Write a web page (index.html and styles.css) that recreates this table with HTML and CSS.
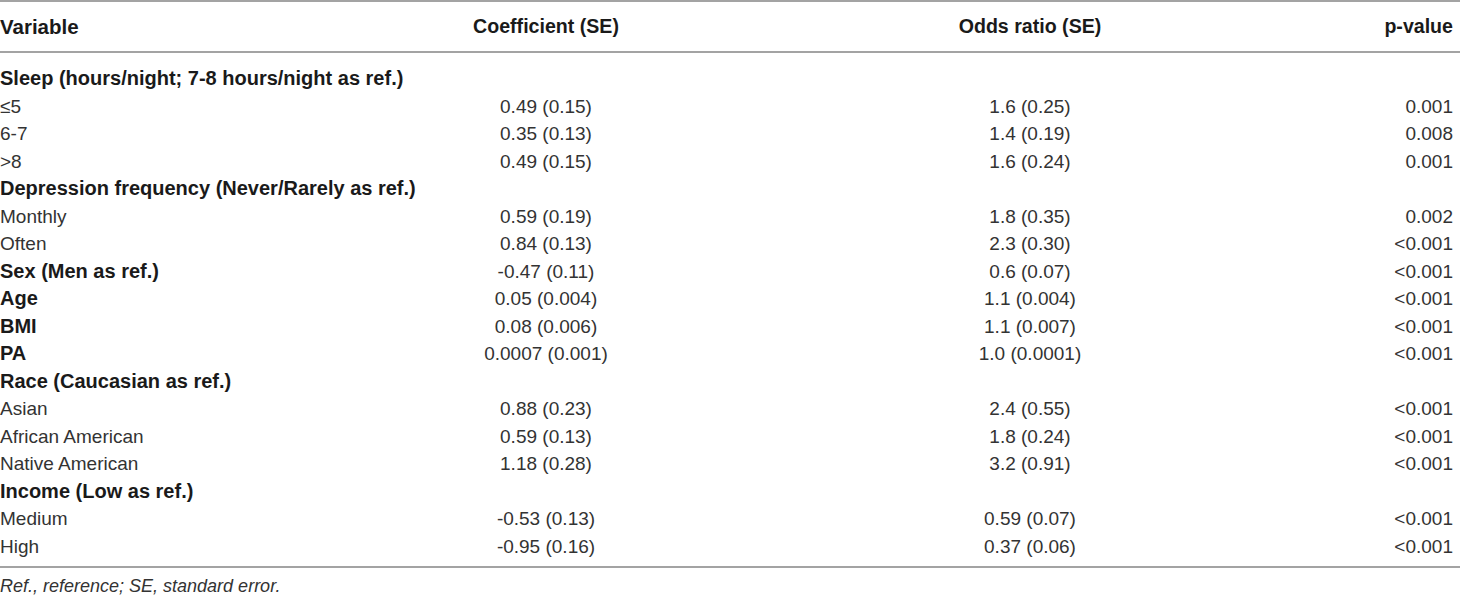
FILE: index.html
```html
<!DOCTYPE html>
<html>
<head>
<meta charset="utf-8">
<link rel="stylesheet" href="styles.css">
</head>
<body>
<table class="tbl">
  <colgroup>
    <col class="c1"><col class="c2"><col class="c3"><col class="c4">
  </colgroup>
  <thead>
    <tr><th class="l">Variable</th><th>Coefficient (SE)</th><th>Odds ratio (SE)</th><th class="r">p-value</th></tr>
  </thead>
  <tbody>
    <tr class="first"><td class="l b">Sleep (hours/night; 7-8 hours/night as ref.)</td><td></td><td></td><td></td></tr>
    <tr><td class="l">≤5</td><td>0.49 (0.15)</td><td>1.6 (0.25)</td><td class="r">0.001</td></tr>
    <tr><td class="l">6-7</td><td>0.35 (0.13)</td><td>1.4 (0.19)</td><td class="r">0.008</td></tr>
    <tr><td class="l">&gt;8</td><td>0.49 (0.15)</td><td>1.6 (0.24)</td><td class="r">0.001</td></tr>
    <tr><td class="l b">Depression frequency (Never/Rarely as ref.)</td><td></td><td></td><td></td></tr>
    <tr><td class="l">Monthly</td><td>0.59 (0.19)</td><td>1.8 (0.35)</td><td class="r">0.002</td></tr>
    <tr><td class="l">Often</td><td>0.84 (0.13)</td><td>2.3 (0.30)</td><td class="r">&lt;0.001</td></tr>
    <tr><td class="l b">Sex (Men as ref.)</td><td>-0.47 (0.11)</td><td>0.6 (0.07)</td><td class="r">&lt;0.001</td></tr>
    <tr><td class="l b">Age</td><td>0.05 (0.004)</td><td>1.1 (0.004)</td><td class="r">&lt;0.001</td></tr>
    <tr><td class="l b">BMI</td><td>0.08 (0.006)</td><td>1.1 (0.007)</td><td class="r">&lt;0.001</td></tr>
    <tr><td class="l b">PA</td><td>0.0007 (0.001)</td><td>1.0 (0.0001)</td><td class="r">&lt;0.001</td></tr>
    <tr><td class="l b">Race (Caucasian as ref.)</td><td></td><td></td><td></td></tr>
    <tr><td class="l">Asian</td><td>0.88 (0.23)</td><td>2.4 (0.55)</td><td class="r">&lt;0.001</td></tr>
    <tr><td class="l">African American</td><td>0.59 (0.13)</td><td>1.8 (0.24)</td><td class="r">&lt;0.001</td></tr>
    <tr><td class="l">Native American</td><td>1.18 (0.28)</td><td>3.2 (0.91)</td><td class="r">&lt;0.001</td></tr>
    <tr><td class="l b">Income (Low as ref.)</td><td></td><td></td><td></td></tr>
    <tr><td class="l">Medium</td><td>-0.53 (0.13)</td><td>0.59 (0.07)</td><td class="r">&lt;0.001</td></tr>
    <tr class="last"><td class="l">High</td><td>-0.95 (0.16)</td><td>0.37 (0.06)</td><td class="r">&lt;0.001</td></tr>
  </tbody>
</table>
<p class="note">Ref., reference; SE, standard error.</p>
</body>
</html>
```
FILE: styles.css
```css
html, body {
  margin: 0;
  padding: 0;
  background: #fff;
}
body {
  font-family: "Liberation Sans", Arial, sans-serif;
  color: #333;
  font-size: 19px;
}
.tbl {
  width: 1460px;
  border-collapse: collapse;
  table-layout: fixed;
}
.c1 { width: 400px; }
.c2 { width: 292px; }
.c3 { width: 676px; }
.c4 { width: 92px; }
.tbl thead th {
  font-weight: bold;
  font-size: 19.6px;
  color: #1a1a1a;
  height: 49px;
  padding: 0;
  text-align: center;
  border-top: 2px solid #a3a3a3;
  border-bottom: 2px solid #a3a3a3;
  vertical-align: middle;
}
.tbl thead th.l { font-size: 20.5px; }
.tbl td {
  height: 27.5px;
  padding: 0;
  text-align: center;
  white-space: nowrap;
  vertical-align: middle;
  line-height: 27.5px;
}
.tbl .l { text-align: left; }
.tbl .r { text-align: right; padding-right: 7px; }
.tbl .b { font-weight: bold; font-size: 20px; color: #1a1a1a; }
.tbl tr.first td { padding-top: 12px; }
.tbl tr.last td { padding-bottom: 6px; border-bottom: 2px solid #a3a3a3; }
.note {
  margin: 8px 0 0 0;
  font-style: italic;
  font-size: 18px;
  color: #333;
}
```
